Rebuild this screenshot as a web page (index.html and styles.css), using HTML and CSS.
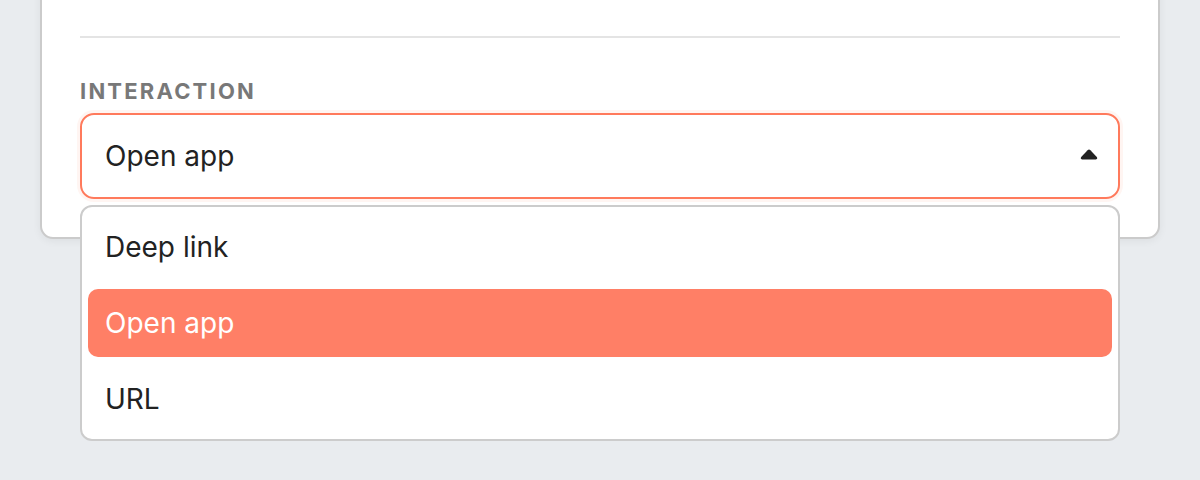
FILE: index.html
```html
<!DOCTYPE html>
<html lang="en">
<head>
<meta charset="utf-8">
<title>Interaction</title>
<link rel="stylesheet" href="styles.css">
</head>
<body>
  <div class="card">
    <div class="card-top"></div>
    <div class="divider"></div>
    <div class="field">
      <div class="label">INTERACTION</div>
      <div class="select-wrap">
        <div class="select">
          <span class="value">Open app</span>
          <svg class="caret" width="18" height="11" viewBox="0 0 18 11"><path d="M7.6 1.2 Q9 -0.2 10.4 1.2 L16.8 8 Q18 10 15.8 10.4 L2.2 10.4 Q0 10 1.2 8 Z" fill="#222"/></svg>
        </div>
        <ul class="menu">
          <li class="option">Deep link</li>
          <li class="option selected">Open app</li>
          <li class="option">URL</li>
        </ul>
      </div>
    </div>
  </div>
</body>
</html>
```
FILE: styles.css
```css
* { box-sizing: border-box; }
html, body { margin: 0; padding: 0; }
body {
  background: #e9ecef;
  font-family: Inter, "Noto Sans", "Liberation Sans", sans-serif;
  color: #222;
  height: 480px;
  overflow: hidden;
}
.card {
  margin: -40px 0 0 40px;
  width: 1120px;
  background: #fff;
  border: 2px solid #cbcbcb;
  border-radius: 0 0 13px 13px;
  box-shadow: 0 2px 8px rgba(0,0,0,0.06);
  padding: 0 38px 38px;
}
.card-top { height: 74px; }
.divider { height: 2px; background: #e4e4e4; }
.field { margin-top: 40px; }
.label {
  font-size: 22px;
  font-weight: 700;
  letter-spacing: 2.2px;
  color: #787878;
  line-height: 26px;
  margin-bottom: 9px;
}
.select-wrap { position: relative; }
.select {
  height: 86px;
  border: 2px solid #ff7a5c;
  border-radius: 14px;
  box-shadow: 0 0 0 3px rgba(255,122,92,0.08);
  display: flex;
  align-items: center;
  justify-content: space-between;
  padding: 0 20px 0 23px;
  font-size: 28px;
}
.caret { display: block; margin-top: -4px; }
.menu {
  position: absolute;
  top: 92px;
  left: 0;
  right: 0;
  margin: 0;
  list-style: none;
  background: #fff;
  border: 2px solid #cccccc;
  border-radius: 12px;
  padding: 6px;
  display: flex;
  flex-direction: column;
  gap: 8px;
}
.option {
  height: 68px;
  display: flex;
  align-items: center;
  padding-left: 17px;
  font-size: 28px;
  border-radius: 10px;
  color: #222;
}
.option.selected {
  background: #ff7f66;
  color: #fff;
}
```
